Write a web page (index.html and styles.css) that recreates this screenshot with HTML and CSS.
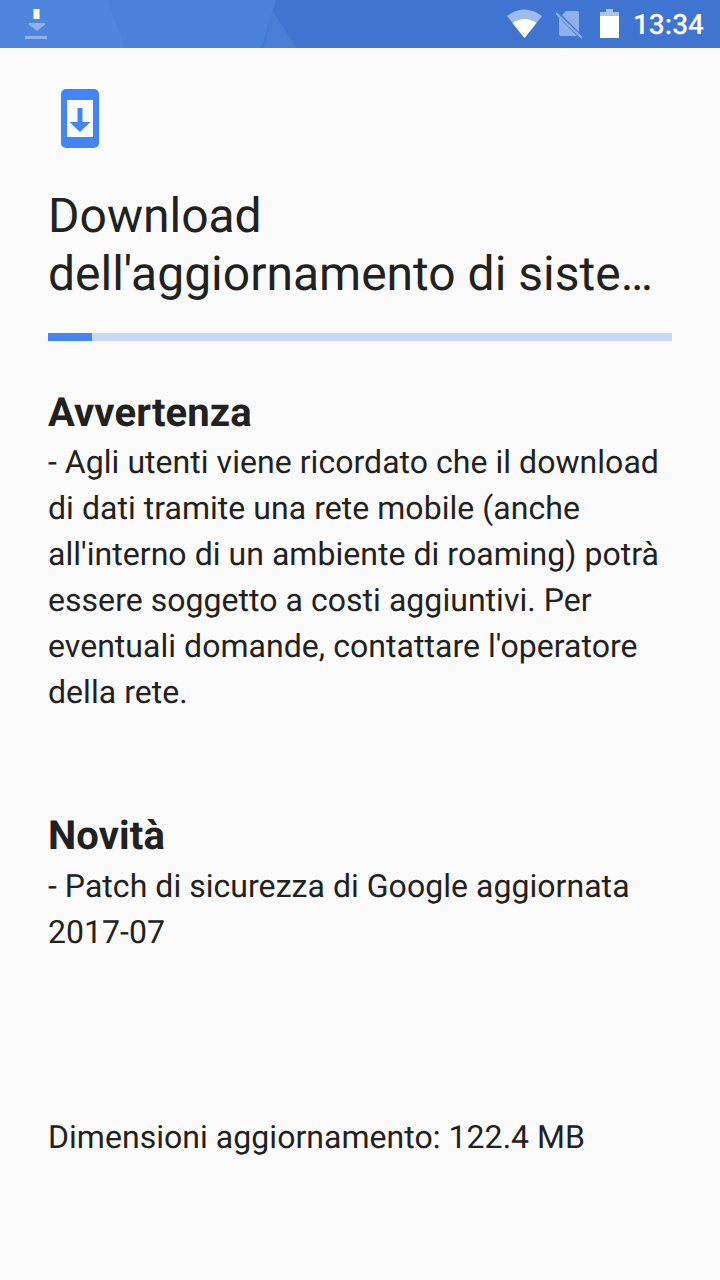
FILE: index.html
```html
<!DOCTYPE html>
<html lang="it">
<head>
    <meta charset="UTF-8">
    <meta name="viewport" content="width=device-width, initial-scale=1.0">
    <title>Download dell'aggiornamento di sistema</title>
    <link rel="stylesheet" href="styles.css">
</head>
<body>

    <header class="status-bar">
        <svg class="status-bg" width="720" height="48" viewBox="0 0 720 48">
            <polygon points="0,0 108,0 126,48 0,48" fill="#4f86dd"/>
            <polygon points="108,0 276,0 262,48 126,48" fill="#4a81db"/>
            <polygon points="273,11 296,48 263,48" fill="#4a7ed6"/>
            <polygon points="495,0 626,0 560,48 520,48" fill="#3f75d0"/>
        </svg>
        <svg class="notif-icon" width="22" height="30" viewBox="0 0 22 30">
            <rect x="8.5" y="0" width="6" height="10" fill="#fff"/>
            <polygon points="4,14 20,14 20,16 17,18 12,22 7,18 4,16" fill="#8fb0e8"/>
            <rect x="0" y="27" width="22" height="3" fill="#8fb0e8"/>
        </svg>
        <div class="status-right">
            <svg class="wifi-icon" width="35" height="30" viewBox="0 0 35 30">
                <path d="M17.5 29 L0 7 Q17.5 -6 35 7 Z" fill="#9dbcec"/>
                <path d="M17.5 29 L5.5 14 Q17.5 6 29.5 14 Z" fill="#fff"/>
            </svg>
            <svg class="sim-icon" width="26" height="30" viewBox="0 0 26 30">
                <path d="M10 2 H21 Q23 2 23 4 V25 Q23 27 21 27 H5 Q3 27 3 25 V9 Z" fill="#8fb0e8"/>
                <path d="M0 3 L26 29" stroke="#3f75d0" stroke-width="4"/>
                <path d="M0 4 L26 29" stroke="#8fb0e8" stroke-width="2"/>
            </svg>
            <svg class="battery-icon" width="19" height="30" viewBox="0 0 19 30">
                <path d="M6 0 H13 V3 H19 V7 H0 V3 H6 Z" fill="#a9c4ef"/>
                <rect x="0" y="7" width="19" height="22" fill="#fff"/>
            </svg>
            <span class="clock">13:34</span>
        </div>
    </header>

    <main class="content">
        <svg class="phone-icon" width="38" height="59" viewBox="0 0 38 59">
            <rect width="38" height="59" rx="5" fill="#4285f4"/>
            <rect x="6" y="11" width="26" height="37" fill="#fafafa"/>
            <rect x="16.5" y="19" width="5" height="14" fill="#4285f4"/>
            <polygon points="8.5,33 29.5,33 19,43" fill="#4285f4"/>
        </svg>

        <h1 class="title">Download<br>dell'aggiornamento di siste…</h1>

        <div class="progress"><div class="progress-fill"></div></div>

        <section class="block">
            <h2 class="block-title">Avvertenza</h2>
            <p class="block-text">- Agli utenti viene ricordato che il download<br>di dati tramite una rete mobile (anche<br>all'interno di un ambiente di roaming) potrà<br>essere soggetto a costi aggiuntivi. Per<br>eventuali domande, contattare l'operatore<br>della rete.</p>
        </section>

        <section class="block block-news">
            <h2 class="block-title">Novità</h2>
            <p class="block-text">- Patch di sicurezza di Google aggiornata<br>2017-07</p>
        </section>

        <p class="block-text size">Dimensioni aggiornamento: 122.4 MB</p>
    </main>

</body>
</html>
```

FILE: styles.css
```css
body {
    margin: 0;
    background-color: #fafafa;
    color: #212121;
    font-family: Roboto, sans-serif;
    text-rendering: geometricPrecision;
}

.status-bar {
    position: relative;
    height: 48px;
    background-color: #3f75d0;
    display: flex;
    align-items: center;
    justify-content: space-between;
    padding: 0 16px 0 25px;
    overflow: hidden;
}
.status-bg { position: absolute; top: 0; left: 0; }
.notif-icon { position: relative; }
.status-right { position: relative; display: flex; align-items: center; }
.sim-icon { margin-left: 14px; }
.battery-icon { margin-left: 18px; }
.clock { margin-left: 14px; font-size: 28px; font-weight: 500; color: #fff; }

.content { padding: 41px 48px 0 48px; }

.phone-icon { display: block; margin-left: 13px; }

.title {
    margin: 39px 0 0 0;
    font-size: 48px;
    font-weight: 400;
    line-height: 58px;
}

.progress {
    margin-top: 30px;
    height: 8px;
    background-color: #c6d9f7;
}
.progress-fill { width: 44px; height: 8px; background-color: #4285f4; }

.block { margin-top: 46px; }
.block-news { margin-top: 94px; }
.block-title {
    margin: 0;
    font-size: 40px;
    font-weight: 700;
    line-height: 52px;
    letter-spacing: 0.1px;
}
.block-news .block-title { line-height: 54px; }
.block-text {
    margin: 0;
    font-size: 32px;
    line-height: 46px;
    letter-spacing: 0.04px;
}
.size { margin-top: 159px; }
```
